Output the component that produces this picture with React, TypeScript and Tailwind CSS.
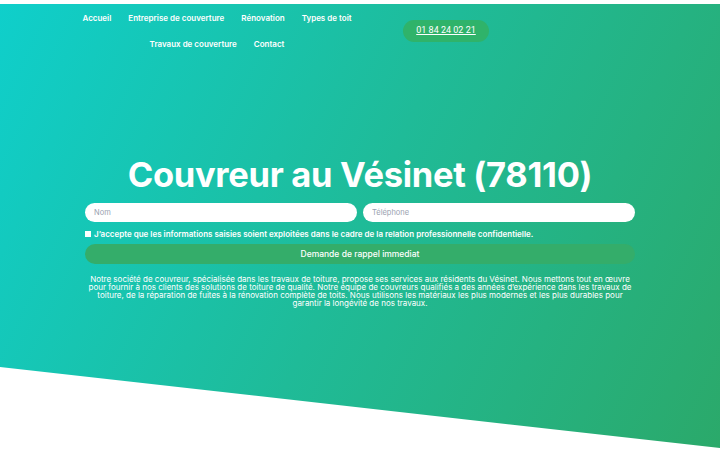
const navItems = [
  "Accueil",
  "Entreprise de couverture",
  "Rénovation",
  "Types de toit",
  "Travaux de couverture",
  "Contact",
]

export default function App() {
  return (
    <div className="h-[450px] w-[720px] overflow-hidden bg-white font-['Inter',sans-serif]">
      <section className="mt-1 h-[446px] bg-[linear-gradient(115deg,#0fcfcb_0%,#1fbb98_50%,#2ba96a_100%)] [clip-path:polygon(0_0,100%_0,100%_444px,0_363px)]">
        <header className="flex items-start">
          <nav className="ml-[67px] mt-[8px] flex w-[300px] flex-wrap justify-center gap-x-[17px] gap-y-[14px] text-[8px] font-semibold leading-[12px] text-white">
            {navItems.map((item) => (
              <a key={item} href="#" className="whitespace-nowrap">
                {item}
              </a>
            ))}
          </nav>
          <a
            href="#"
            className="ml-[36px] mt-[16px] flex h-[22px] w-[86px] items-center justify-center rounded-full bg-[#2fb36a] font-['Roboto',sans-serif] text-[9px] text-white underline"
          >
            01 84 24 02 21
          </a>
        </header>

        <h1 className="mt-[102px] text-center text-[34.5px] font-bold leading-[46px] tracking-[-0.3px] text-white">
          Couvreur au Vésinet (78110)
        </h1>

        <form className="mx-auto mt-[5px] w-[550px]">
          <div className="flex gap-[6px]">
            <input
              placeholder="Nom"
              className="h-[19px] flex-1 rounded-full bg-white px-[9px] text-[7.5px] text-gray-700 placeholder:text-gray-400"
            />
            <input
              placeholder="Téléphone"
              className="h-[19px] flex-1 rounded-full bg-white px-[9px] text-[7.5px] text-gray-700 placeholder:text-gray-400"
            />
          </div>
          <label className="mt-[6px] flex items-center gap-[3px] text-[8px] font-semibold text-white">
            <span className="h-[6px] w-[6px] bg-white"></span>
            J’accepte que les informations saisies soient exploitées dans le cadre de la relation professionnelle confidentielle.
          </label>
          <button
            type="button"
            className="mt-[4px] flex h-[20px] w-full items-center justify-center rounded-full bg-[#34ad6a] text-[8.5px] font-medium text-white"
          >
            Demande de rappel immediat
          </button>
        </form>

        <p className="mx-auto mt-[11px] w-[552px] text-center text-[8px] leading-[8px] text-white">
          Notre société de couvreur, spécialisée dans les travaux de toiture, propose ses services aux résidents du Vésinet. Nous mettons tout en œuvre pour fournir à nos clients des solutions de toiture de qualité. Notre équipe de couvreurs qualifiés a des années d’expérience dans les travaux de toiture, de la réparation de fuites à la rénovation complète de toits. Nous utilisons les matériaux les plus modernes et les plus durables pour garantir la longévité de nos travaux.
        </p>
      </section>
    </div>
  )
}
